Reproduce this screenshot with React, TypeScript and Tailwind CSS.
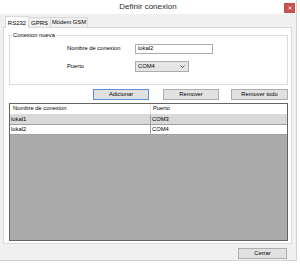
import React from 'react';

const font = { fontFamily: '"Liberation Sans", Arial, sans-serif' };

const Button: React.FC<{ label: string; width: string; focused?: boolean }> = ({ label, width, focused }) => (
  <div
    className={`${width} h-[11px] flex items-center justify-center bg-[#e1e1e1] border text-[5.8px] leading-none text-black ${
      focused ? 'border-[#5b8fd0]' : 'border-[#adadad]'
    }`}
  >
    {label}
  </div>
);

const rows = [
  { name: 'lokal1', port: 'COM3', selected: true },
  { name: 'lokal2', port: 'COM4', selected: false },
];

const App: React.FC = () => {
  return (
    <div className="w-[300px] h-[266px] bg-white" style={font}>
      <div className="w-[297px] h-[261px] bg-[#f0f0f0] border-r border-b border-[#d4d4d4] flex flex-col">
        {/* title bar */}
        <div className="h-[14px] bg-white relative flex items-center justify-center text-[8px] leading-none text-[#2b2b2b]">
          Definir conexion
          <div className="absolute top-[3px] right-[1px] w-[11px] h-[10px] bg-[#c75050] flex items-center justify-center">
            <svg width="4" height="4" viewBox="0 0 4 4">
              <path d="M0.5 0.5L3.5 3.5M3.5 0.5L0.5 3.5" stroke="white" strokeWidth="0.8" />
            </svg>
          </div>
        </div>

        {/* tabs */}
        <div className="h-[13px] flex items-end pl-[5px]">
          <div className="w-[24px] h-[12px] bg-white border border-b-0 border-[#d9d9d9] -mb-px relative z-10 flex items-center justify-center text-[6px] leading-none">
            RS232
          </div>
          <div className="w-[22px] h-[10px] border border-l-0 border-b-0 border-[#d9d9d9] flex items-center justify-center text-[6px] leading-none">
            GPRS
          </div>
          <div className="w-[37px] h-[10px] border border-l-0 border-b-0 border-[#d9d9d9] flex items-center justify-center text-[5.8px] leading-none">
            Módem GSM
          </div>
        </div>

        {/* tab page */}
        <div className="ml-[3px] w-[289px] h-[217px] bg-white border border-[#d9d9d9] pl-[5px] pr-[3px] pt-[4px] pb-[2px] flex flex-col">
          <fieldset className="h-[53px] border border-[#dcdcdc] px-0">
            <legend className="ml-[2px] px-[1px] text-[5.8px] leading-[7px]">Conexion nueva</legend>
            <div className="grid grid-cols-[68px_auto] items-center pl-[57px] mt-[5px] gap-y-[7px] text-[5.8px] leading-none">
              <span>Nombre de conexion</span>
              <div className="w-[78px] h-[10px] border border-[#abadb3] bg-white flex items-center pl-[2px]">lokal2</div>
              <span>Puerto</span>
              <div className="w-[54px] h-[11px] border border-[#acacac] bg-[#e5e5e5] flex items-center justify-between pl-[2px] pr-[3px]">
                <span>COM4</span>
                <svg width="5" height="3" viewBox="0 0 5 3">
                  <path d="M0.5 0.5L2.5 2.5L4.5 0.5" stroke="#333" strokeWidth="0.8" fill="none" />
                </svg>
              </div>
            </div>
          </fieldset>

          <div className="mt-[4px] flex justify-end">
            <Button label="Adicionar" width="w-[56px]" focused />
            <div className="ml-[14px]">
              <Button label="Remover" width="w-[56px]" />
            </div>
            <div className="ml-[12px]">
              <Button label="Remover todo" width="w-[57px]" />
            </div>
          </div>

          <div className="mt-[3px] flex-1 bg-[#ababab] border border-[#646464] flex flex-col text-[5.8px] leading-none">
            <div className="h-[11px] bg-white flex border-b border-[#d9d9d9]">
              <div className="w-[141px] border-r border-[#e5e5e5] flex items-center pl-[3px]">Nombre de conexion</div>
              <div className="flex-1 flex items-center pl-[2px]">Puerto</div>
            </div>
            {rows.map((r) => (
              <div
                key={r.name}
                className={`h-[10px] flex border-b border-[#a0a0a0] ${r.selected ? 'bg-[#d9d9d9]' : 'bg-white'}`}
              >
                <div className="w-[141px] border-r border-[#a0a0a0] flex items-center pl-[1px]">{r.name}</div>
                <div className="flex-1 flex items-center pl-[1px]">{r.port}</div>
              </div>
            ))}
          </div>
        </div>

        {/* bottom */}
        <div className="mt-[4px] flex justify-end pr-[9px]">
          <Button label="Cerrar" width="w-[49px]" />
        </div>
      </div>
    </div>
  );
};

export default App;
